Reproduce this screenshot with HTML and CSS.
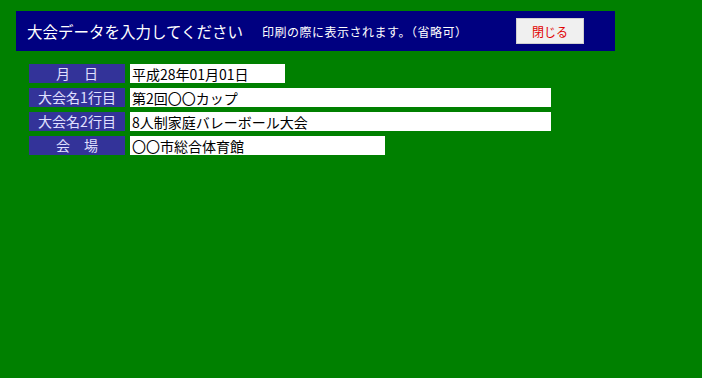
FILE: index.html
```html
<!DOCTYPE html>
<html lang="ja">
<head>
  <meta charset="UTF-8">
  <title>大会データ入力</title>
  <link rel="stylesheet" href="styles.css">
</head>
<body>

  <div class="cabecera">
    <span class="titulo">大会データを入力してください</span>
    <span class="nota">印刷の際に表示されます。（省略可）</span>
    <button class="btn-cerrar">閉じる</button>
  </div>

  <div class="formulario">
    <div class="fila">
      <label>月　日</label>
      <input type="text" class="corto" value="平成28年01月01日">
    </div>
    <div class="fila">
      <label>大会名1行目</label>
      <input type="text" class="largo" value="第2回〇〇カップ">
    </div>
    <div class="fila">
      <label>大会名2行目</label>
      <input type="text" class="largo" value="8人制家庭バレーボール大会">
    </div>
    <div class="fila">
      <label>会　場</label>
      <input type="text" class="medio" value="〇〇市総合体育館">
    </div>
  </div>

</body>
</html>
```
FILE: styles.css
```css
body {
  margin: 0;
  padding: 11px 16px;
  background-color: #008000;
  font-family: "Noto Sans CJK JP", "DejaVu Sans", sans-serif;
}
.cabecera {
  width: 599px;
  height: 40px;
  background-color: #000080;
  color: white;
  display: flex;
  align-items: center;
  box-sizing: border-box;
  padding-left: 11px;
}
.titulo {
  font-size: 15.5px;
  margin-right: 19px;
}
.nota {
  font-size: 12px;
  letter-spacing: 0.5px;
}
.btn-cerrar {
  margin-left: auto;
  margin-right: 31px;
  width: 68px;
  height: 26px;
  background-color: #f0f0f0;
  color: #e00000;
  border: 1px solid #d0d0d0;
  font-family: inherit;
  font-size: 12px;
  padding: 0;
}
.formulario {
  margin-top: 13px;
  margin-left: 13px;
  display: flex;
  flex-direction: column;
  gap: 5px;
}
.fila {
  display: flex;
  gap: 5px;
  height: 19px;
}
.fila label {
  width: 96px;
  background-color: #333399;
  color: #e0e0ff;
  font-size: 14px;
  text-align: center;
  line-height: 19px;
}
.fila input {
  height: 19px;
  box-sizing: border-box;
  border: none;
  padding: 0 2px;
  font-family: inherit;
  font-size: 14px;
  color: #000;
  background: white;
}
.corto { width: 155px; }
.medio { width: 255px; }
.largo { width: 421px; }
```
